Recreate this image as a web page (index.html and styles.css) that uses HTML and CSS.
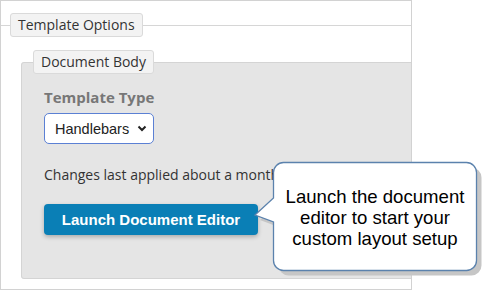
FILE: index.html
```html
<!DOCTYPE html>
<html lang="en">
<head>
    <meta charset="UTF-8">
    <title>Template Options</title>
    <link rel="stylesheet" href="styles.css">
</head>
<body>

<div class="panel">
    <fieldset class="options">
        <legend class="tab">Template Options</legend>

        <fieldset class="doc-body">
            <legend class="tab">Document Body</legend>

            <div class="doc-content">
                <label class="field-label" for="template-type">Template Type</label>
                <div class="select-wrap">
                    <select id="template-type" class="select">
                        <option>Handlebars</option>
                        <option>Liquid</option>
                    </select>
                    <svg class="chevron" width="10" height="7" viewBox="0 0 10 7">
                        <path d="M1.5 1.5 L5 5 L8.5 1.5" fill="none" stroke="#222" stroke-width="2"/>
                    </svg>
                </div>

                <p class="status">Changes last applied about a month ago</p>

                <button class="launch-button">Launch Document Editor</button>
            </div>
        </fieldset>
    </fieldset>
</div>

<!-- Tooltip callout -->
<div class="callout">
    <svg class="callout-shape" width="240" height="124" viewBox="0 0 240 124">
        <path transform="translate(5 5)" fill="#c6c6c6" d="M33.5 5.5 H216.5 A10 10 0 0 1 226.5 15.5 V103.5 A10 10 0 0 1 216.5 113.5 H33.5 A10 10 0 0 1 23.5 103.5 V65 L5 58 L23.5 41 V15.5 A10 10 0 0 1 33.5 5.5 Z"/>
        <path fill="#fff" stroke="#5b82ad" stroke-width="1.3" d="M33.5 5.5 H216.5 A10 10 0 0 1 226.5 15.5 V103.5 A10 10 0 0 1 216.5 113.5 H33.5 A10 10 0 0 1 23.5 103.5 V65 L5 58 L23.5 41 V15.5 A10 10 0 0 1 33.5 5.5 Z"/>
    </svg>
    <div class="callout-text">Launch the document editor to start your custom layout setup</div>
</div>

</body>
</html>
```

FILE: styles.css
```css
/* Global */
body {
    margin: 0;
    font-family: 'Open Sans', 'DejaVu Sans', sans-serif;
    color: #333;
    background-color: #fff;
}

/* Outer panel */
.panel {
    width: 410px;
    height: 288px;
    border: 1px solid #d2d2d2;
    overflow: hidden;
    background-color: #fff;
}

fieldset {
    margin: 0;
    padding: 0;
    min-width: 0;
}

.options {
    border: none;
    border-top: 1px solid #d6d6d6;
    margin-top: 12px;
    padding-top: 13px;
}

.tab {
    background-color: #f3f3f3;
    border: 1px solid #dadada;
    border-radius: 3px;
    padding: 0 7px;
    height: 22px;
    line-height: 22px;
    font-size: 14px;
    color: #333;
    box-sizing: content-box;
}

.options > .tab {
    margin-left: 9px;
}

.doc-body {
    background-color: #e5e5e5;
    border: 1px solid #d4d4d4;
    border-radius: 3px;
    margin-left: 20px;
    width: 420px;
    height: 229px;
    box-sizing: border-box;
}

.doc-body > .tab {
    margin-left: 11px;
}

.doc-content {
    padding: 14px 0 0 22px;
}

.field-label {
    display: block;
    font-size: 15px;
    font-weight: bold;
    color: #777;
    line-height: 18px;
}

.select-wrap {
    position: relative;
    width: 110px;
    margin-top: 7px;
}

.select {
    appearance: none;
    -webkit-appearance: none;
    width: 110px;
    height: 31px;
    border: 1px solid #5b80d4;
    border-radius: 5px;
    background-color: #fff;
    font-family: 'Liberation Sans', Arial, sans-serif;
    font-size: 14.5px;
    color: #222;
    padding: 0 0 0 10px;
}

.chevron {
    position: absolute;
    right: 7px;
    top: 12px;
    pointer-events: none;
}

.status {
    margin: 22px 0 0;
    font-size: 14px;
    line-height: 18px;
    white-space: nowrap;
}

.launch-button {
    margin-top: 20px;
    width: 214px;
    height: 31px;
    border: none;
    border-radius: 4px;
    background-color: #0a7fb6;
    color: #fff;
    font-family: 'Liberation Sans', Arial, sans-serif;
    font-size: 15px;
    font-weight: bold;
    box-shadow: 0 2px 4px rgba(0, 0, 0, 0.25);
    cursor: pointer;
}

/* Callout */
.callout {
    position: absolute;
    left: 250px;
    top: 157px;
    width: 240px;
    height: 124px;
}

.callout-shape {
    position: absolute;
    left: 0;
    top: 0;
}

.callout-text {
    position: absolute;
    left: 23px;
    top: 29px;
    width: 204px;
    text-align: center;
    font-family: 'Liberation Sans', Arial, sans-serif;
    font-size: 18.6px;
    line-height: 21px;
    color: #000;
}
```
